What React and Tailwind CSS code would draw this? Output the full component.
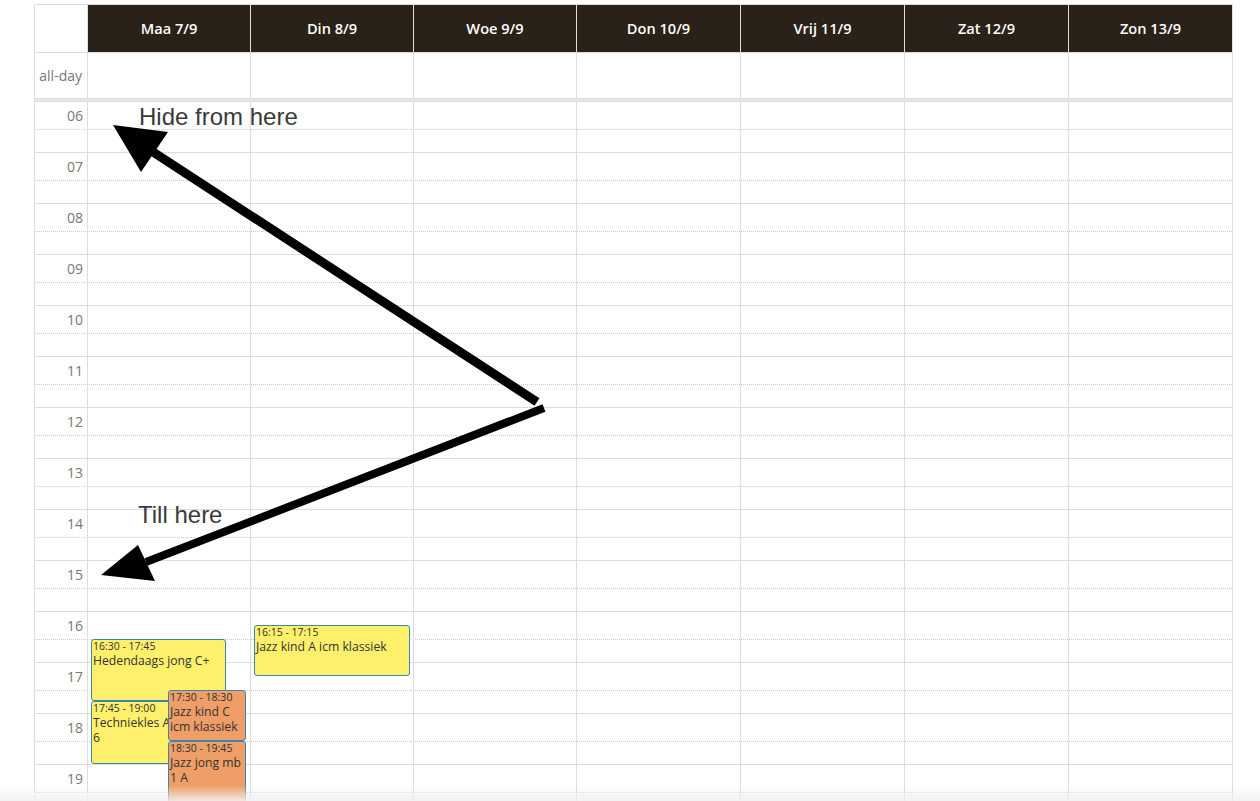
import React from 'react';

const days = ['Maa 7/9', 'Din 8/9', 'Woe 9/9', 'Don 10/9', 'Vrij 11/9', 'Zat 12/9', 'Zon 13/9'];
const hours = ['06', '07', '08', '09', '10', '11', '12', '13', '14', '15', '16', '17', '18', '19', '20'];

const cols = 'grid grid-cols-[53px_162px_163px_163px_164px_164px_164px_minmax(0,1fr)]';

// events per day column, top/height in px from the top of the 06 row
const events = {
  0: [
    { time: '16:30 - 17:45', title: 'Hedendaags jong C+', top: 538, height: 62, left: 3, width: 135, color: 'bg-[#fef06b]', z: 'z-[1]' },
    { time: '17:45 - 19:00', title: 'Techniekles A 6', top: 600, height: 63, left: 3, width: 88, color: 'bg-[#fef06b]', z: 'z-[1]' },
    { time: '17:30 - 18:30', title: 'Jazz kind C icm klassiek', top: 589, height: 51, left: 80, width: 78, color: 'bg-[#ee9e66]', z: 'z-[2]' },
    { time: '18:30 - 19:45', title: 'Jazz jong mb 1 A', top: 640, height: 63, left: 80, width: 78, color: 'bg-[#ee9e66]', z: 'z-[2]' },
  ],
  1: [
    { time: '16:15 - 17:15', title: 'Jazz kind A icm klassiek', top: 524, height: 51, left: 3, width: 156, color: 'bg-[#fef06b]', z: 'z-[1]' },
  ],
};

function Event({ ev }) {
  return (
    <div
      className={`absolute ${ev.color} ${ev.z} border border-[#3a87ad] rounded-[3px] overflow-hidden text-[#333] leading-[15px] px-[1px]`}
      style={{ top: ev.top, height: ev.height, left: ev.left, width: ev.width }}
    >
      <div className="text-[10.5px] leading-[13px]">{ev.time}</div>
      <div className="text-[12.2px] leading-[15px]">{ev.title}</div>
    </div>
  );
}

export default function App() {
  return (
    <div className="relative h-[801px] overflow-hidden bg-white" style={{ fontFamily: '"Open Sans", sans-serif' }}>
      <div className="ml-[34px] mt-[4px] w-[1199px] border-l border-t border-r border-[#ddd]">
        {/* header */}
        <div className={`${cols} border-b border-[#ddd] h-[48px]`}>
          <div className="border-r border-[#ddd]" />
          {days.map((d, i) => (
            <div
              key={d}
              className={`bg-[#2a2118] text-white text-[14.6px] font-semibold flex items-center justify-center ${i > 0 ? 'border-l border-[#ddd]' : ''}`}
            >
              {d}
            </div>
          ))}
        </div>

        {/* all-day */}
        <div className={`${cols} border-b border-[#ddd] h-[46px]`}>
          <div className="border-r border-[#ddd] text-[14px] text-[#777] flex items-center justify-end pr-[5px]">all-day</div>
          {days.map((d, i) => (
            <div key={d} className={i > 0 ? 'border-l border-[#ddd]' : ''} />
          ))}
        </div>
        <div className="h-[2px] bg-[#e6e6e6]" />

        {/* time grid */}
        <div className="grid">
          <div className="[grid-area:1/1]">
            {hours.map((h) => (
              <div key={h}>
                <div className="h-[28px] border-t border-[#ddd] flex">
                  <div className="w-[53px] text-[14px] text-[#777] text-right pr-[5px] leading-[27px]">{h}</div>
                </div>
                <div className="h-[23px] border-t border-dotted border-[#ccc]" />
              </div>
            ))}
          </div>
          <div className={`[grid-area:1/1] ${cols}`}>
            <div className="border-r border-[#ddd]" />
            {days.map((d, i) => (
              <div key={d} className={`relative ${i > 0 ? 'border-l border-[#ddd]' : ''}`}>
                {(events[i] || []).map((ev) => (
                  <Event key={ev.time} ev={ev} />
                ))}
              </div>
            ))}
          </div>
        </div>
      </div>

      {/* annotations */}
      <div className="absolute left-[139px] top-[105px] text-[24px] leading-none text-[#3a3a3a] z-10" style={{ fontFamily: '"Liberation Sans", Arial, sans-serif' }}>
        Hide from here
      </div>
      <div className="absolute left-[138px] top-[503px] text-[24px] leading-none text-[#3a3a3a] z-10" style={{ fontFamily: '"Liberation Sans", Arial, sans-serif' }}>
        Till here
      </div>
      <svg className="absolute inset-0 z-10 pointer-events-none" width="1260" height="801" viewBox="0 0 1260 801">
        <line x1="537" y1="402" x2="150" y2="150" stroke="#000" strokeWidth="9" />
        <polygon points="113,125 168,132 141,172" fill="#000" />
        <line x1="544" y1="408" x2="146" y2="562" stroke="#000" strokeWidth="8" />
        <polygon points="101,575 138,545 155,581" fill="#000" />
      </svg>

      <div className="absolute left-0 right-0 bottom-0 h-[16px] z-20 bg-gradient-to-b from-transparent to-[#f0f0f0]/90" />
    </div>
  );
}
